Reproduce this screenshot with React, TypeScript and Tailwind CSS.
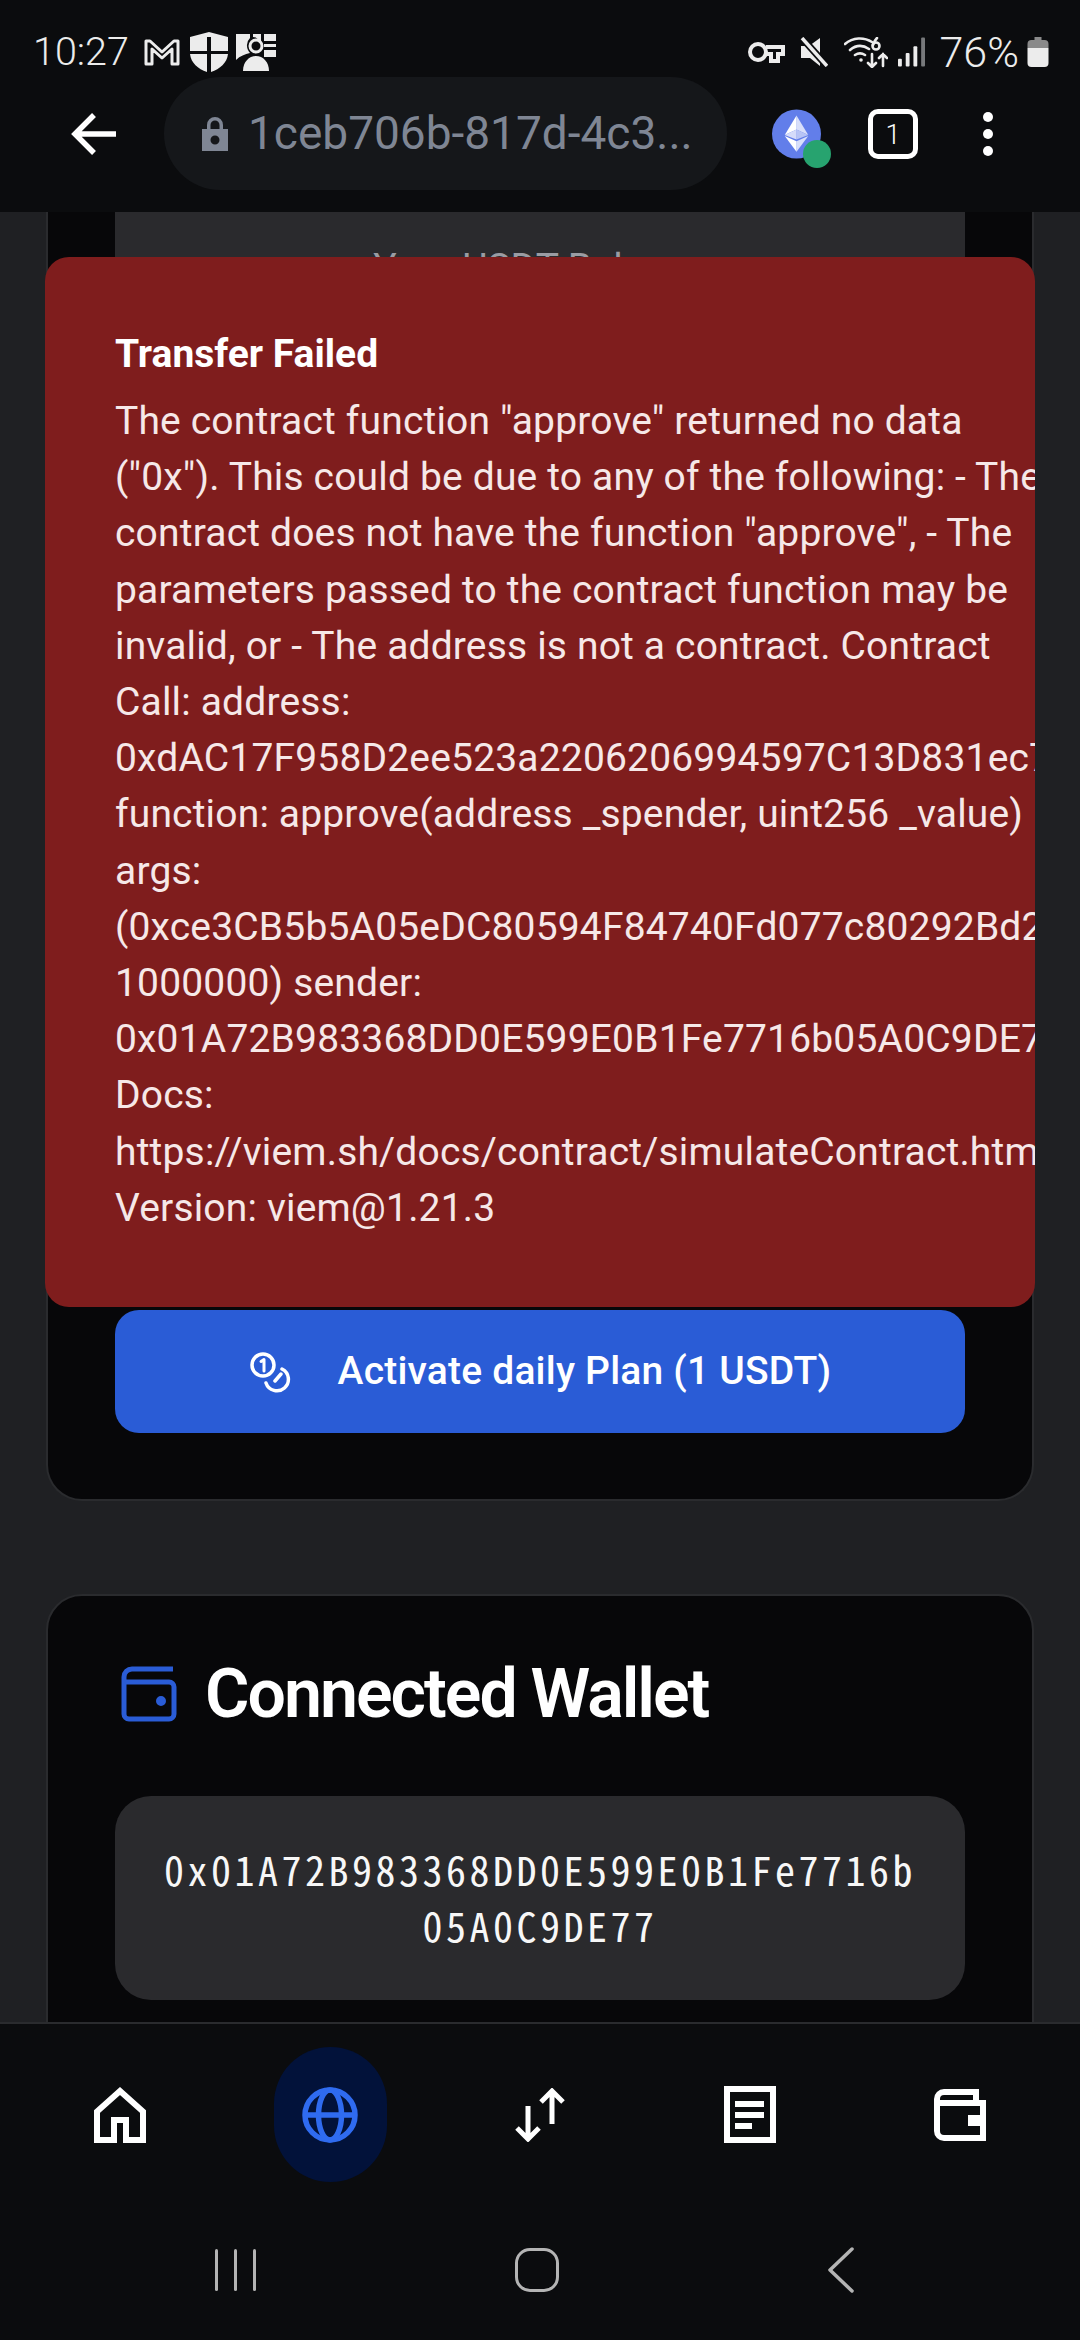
const errorText =
  'The contract function "approve" returned no data ("0x"). This could be due to any of the following: - The contract does not have the function "approve", - The parameters passed to the contract function may be invalid, or - The address is not a contract. Contract Call: address: 0xdAC17F958D2ee523a2206206994597C13D831ec7 function: approve(address _spender, uint256 _value) args: (0xce3CB5b5A05eDC80594F84740Fd077c80292Bd2c, 1000000) sender: 0x01A72B983368DD0E599E0B1Fe7716b05A0C9DE77 Docs: https://viem.sh/docs/contract/simulateContract.html Version: viem@1.21.3';

function StatusBar() {
  return (
    <div className="flex h-[77px] items-start justify-between pl-[33px] pr-[31px] pt-[32px] leading-[40px] text-[#ececec]">
      <div className="flex items-center">
        <span className="w-[95px] text-[39.500px] font-light">10:27</span>
        <svg viewBox="0 0 36 28" className="ml-[16px] w-[36px] h-[28px]" fill="none" stroke="#ececec" strokeWidth="3" strokeLinejoin="round">
          <path d="M2 3h4l12 11L30 3h4v23h-6V11L18 20 8 11v15H2z" />
        </svg>
        <svg viewBox="0 0 38 40" className="ml-[10px] w-[38px] h-[40px]" fill="#ececec">
          <path d="M0 5 19 0l19 5v14H21V5h-4v14H0z" />
          <path d="M0 22h17v18C8 37 1 31 0 22zM21 22h17c-1 9-8 15-17 18z" />
        </svg>
        <svg viewBox="0 0 40 38" className="ml-[8px] w-[40px] h-[38px]" fill="#ececec">
          <path d="M0 1h14v4a10 10 0 0 0-3 8c0 2 1 5 3 7-5 1-10 3-14 7zM28 1h12v7H28zM28 11h12v3H28zM28 17h12v7H28z" />
          <path d="M17 1h8v9h-2a6 6 0 0 0-6-6z" />
          <circle cx="20" cy="13" r="6" fill="none" stroke="#ececec" strokeWidth="3" />
          <path d="M7 38c0-9 6-15 13-15s13 6 13 15z" />
        </svg>
      </div>
      <div className="flex items-center">
        <svg viewBox="0 0 37 22" className="w-[37px] h-[22px] mr-[15px]" fill="none" stroke="#ececec" strokeWidth="4">
          <circle cx="10" cy="11" r="8" />
          <path d="M18 6h17v7h-5v7h-7v-7h-5" />
        </svg>
        <svg viewBox="0 0 28 30" className="w-[28px] h-[30px] mr-[16px]" fill="#ececec">
          <path d="M20 1v28l-10-8H1V9h8z" />
          <path d="m2 1 25 28" stroke="#0b0c0e" strokeWidth="7" />
          <path d="m2 1 25 28" stroke="#ececec" strokeWidth="3.500" />
        </svg>
        <svg viewBox="0 0 44 31" className="w-[44px] h-[31px] mr-[10px]" fill="none" stroke="#ececec" strokeWidth="2.600" strokeLinecap="round">
          <path d="M1 7c8-7 19-7 27-2M6 13c6-5 13-5 19-1M11 18c3-2 7-2 10 0" />
          <circle cx="17" cy="23" r="1.800" fill="#ececec" stroke="none" />
          <circle cx="32" cy="9" r="3.500" />
          <path d="M33 1c-2 2-3 4-4 7" />
          <path d="M28 17v13m-4-4 4 4 4-4M39 29V17m-4 4 4-4 4 4" />
        </svg>
        <svg viewBox="0 0 28 30" className="w-[27px] h-[30px] mr-[15px]" fill="#ececec">
          <rect x="0" y="22" width="4" height="8" rx="1" />
          <rect x="8" y="16" width="4" height="14" rx="1" />
          <rect x="16" y="9" width="4" height="21" rx="1" />
          <rect x="24" y="0" width="4" height="30" rx="1" fill="#77797b" />
        </svg>
        <span className="text-[43px] font-light mr-[8px]">76%</span>
        <svg viewBox="0 0 21 30" className="w-[22px] h-[30px]" fill="#ececec">
          <path d="M7 0h7v3h3a4 4 0 0 1 4 4v4H0V7a4 4 0 0 1 4-4h3z" fill="#8a8a8a" />
          <path d="M0 11h21v15a4 4 0 0 1-4 4H4a4 4 0 0 1-4-4z" />
        </svg>
      </div>
    </div>
  );
}

function BrowserBar() {
  return (
    <div className="flex h-[113px] items-center pl-[71px]">
      <svg viewBox="0 0 45 42" className="w-[45px] h-[42px]" fill="none" stroke="#fff" strokeWidth="5.500">
        <path d="M45 21H5M23 2 4 21l19 19" />
      </svg>
      <div className="ml-[48px] flex h-[113px] w-[563px] items-center rounded-full bg-[#15171a] pl-[38px]">
        <svg viewBox="0 0 26 34" className="w-[26px] h-[34px]" fill="#7f8694">
          <path d="M5 13V8a8 8 0 0 1 16 0v5h-3.500V8a4.500 4.500 0 0 0-9 0v5z" />
          <path fillRule="evenodd" d="M0 12h26v22H0zM13 18.500a4.500 4.500 0 1 0 0 9 4.500 4.500 0 0 0 0-9z" />
        </svg>
        <span className="ml-[20px] whitespace-nowrap text-[46px] text-[#7f8694]">1ceb706b-817d-4c3...</span>
      </div>
      <div className="relative ml-[45px] h-[50px] w-[49px]">
        <svg viewBox="0 0 50 50" className="w-[49px] h-[50px]">
          <circle cx="25" cy="25" r="25" fill="#627eea" />
          <path d="M25 6v14.500L37 26z" fill="#d8dffa" />
          <path d="M25 6 13 26l12-5.500z" fill="#fff" />
          <path d="M25 32.500V43l12-16z" fill="#d8dffa" />
          <path d="M25 32.500V43L13 27z" fill="#fff" />
          <path d="M25 30.500 37 26l-12-5.500z" fill="#b7c4f5" />
          <path d="M25 30.500 13 26l12-5.500z" fill="#d5dcfa" />
        </svg>
        <span className="absolute left-[31px] top-[31px] h-[28px] w-[28px] rounded-full bg-[#27a36f]" />
      </div>
      <div className="ml-[47px] flex h-[50px] w-[50px] items-center justify-center rounded-[10px] border-[5px] border-white pt-[3px] text-[27px] font-light text-white">
        1
      </div>
      <div className="ml-[65px] flex flex-col gap-[7px]">
        <span className="h-[10px] w-[10px] rounded-full bg-white" />
        <span className="h-[10px] w-[10px] rounded-full bg-white" />
        <span className="h-[10px] w-[10px] rounded-full bg-white" />
      </div>
    </div>
  );
}

function PlanCard() {
  return (
    <div className="mx-[46px] rounded-b-[36px] border-x-2 border-b-2 border-[#2a2b2e] bg-[#070709] px-[67px] pb-[66px]">
      <div className="h-[1070px] bg-[#2a2a2d] pt-[32px] text-center text-[39px] leading-[48px] text-[#9a9ca3]">
        Your USDT Balance
      </div>
      <div className="mt-[28px] flex h-[123px] items-center justify-center rounded-[24px] bg-[#2a5cd6] text-[39px] font-medium tracking-[0.2px] text-white">
        <svg viewBox="0 0 42 42" className="mr-[47px] w-[42px] h-[42px]" fill="none" stroke="#fff" strokeWidth="3.500" strokeLinecap="round">
          <circle cx="14" cy="14" r="11" />
          <path d="M15 20V8.500l-3 2" strokeWidth="3" strokeLinejoin="round" />
          <path d="M33 18a11.500 11.500 0 1 1-16 14M32 23l-6 7" />
        </svg>
        Activate daily Plan (1 USDT)
      </div>
    </div>
  );
}

function WalletCard() {
  return (
    <div className="mx-[46px] mt-[93px] h-[600px] rounded-[36px] border-2 border-[#2a2b2e] bg-[#070709] px-[67px] pt-[62px]">
      <div className="flex items-center gap-[27px] pl-[5px]">
        <svg viewBox="0 0 58 58" className="w-[58px] h-[58px]" fill="none" stroke="#2a5cd6" strokeWidth="5">
          <path d="M53 4H12a8 8 0 0 0-8 8v37a5 5 0 0 0 5 5h40a5 5 0 0 0 5-5V22a5 5 0 0 0-5-5H6" strokeLinejoin="round" />
          <circle cx="41" cy="36" r="2.500" fill="#2a5cd6" />
        </svg>
        <h2 className="text-[68px] font-semibold leading-[72px] tracking-[-2px] text-white">Connected Wallet</h2>
      </div>
      <div className="mt-[66px] h-[204px] rounded-[36px] bg-[#2a2a2d] px-[40px] py-[45px] text-center font-['Noto_Sans_Mono_CJK_SC','DejaVu_Sans_Mono',monospace] text-[40px] leading-[56px] tracking-[3.500px] break-all text-[#f7f7f7]">
        0x01A72B983368DD0E599E0B1Fe7716b05A0C9DE77
      </div>
    </div>
  );
}

function BottomNav() {
  return (
    <div className="border-t-2 border-[#2a2b2e] bg-[#0b0c0e]">
      <div className="grid h-[186px] grid-cols-5 px-[15px] pt-[23px]">
        <div className="flex h-[135px] items-center justify-center">
          <svg viewBox="0 0 52 56" className="w-[52px] h-[56px]" fill="none" stroke="#fff" strokeWidth="6">
            <path d="M3 53V24.500L26 4l23 20.500V53H32V33H20v20z" />
          </svg>
        </div>
        <div className="flex h-[135px] items-center justify-center">
          <div className="flex h-[135px] w-[113px] items-center justify-center rounded-full bg-[#02123a]">
            <svg viewBox="0 0 56 56" className="w-[56px] h-[56px]" fill="none" stroke="#2f6bf0" strokeWidth="5.500">
              <circle cx="28" cy="28" r="25" />
              <ellipse cx="28" cy="28" rx="11.500" ry="25" />
              <path d="M3 28h50" />
            </svg>
          </div>
        </div>
        <div className="flex h-[135px] items-center justify-center">
          <svg viewBox="0 0 50 54" className="w-[50px] h-[54px]" fill="none" stroke="#fff" strokeWidth="5">
            <path d="M13 18v32M2 40l11 11 11-11" />
            <path d="M37 4v32M26 14 37 3l11 11" />
          </svg>
        </div>
        <div className="flex h-[135px] items-center justify-center">
          <svg viewBox="0 0 52 57" className="w-[52px] h-[57px]" fill="#fff">
            <path fillRule="evenodd" d="M0 0h52v57H0zM6 6v45h40V6z" />
            <rect x="11" y="15" width="29" height="6" />
            <rect x="11" y="26" width="29" height="6" />
            <rect x="11" y="37" width="17" height="6" />
          </svg>
        </div>
        <div className="flex h-[135px] items-center justify-center">
          <svg viewBox="0 0 52 52" className="w-[52px] h-[52px]" fill="none" stroke="#fff" strokeWidth="6">
            <path d="M42 14V3H10a7 7 0 0 0-7 7v32a7 7 0 0 0 7 7h39V14H3" />
            <rect x="34" y="26" width="12" height="11" fill="#fff" stroke="none" />
          </svg>
        </div>
      </div>
      <div className="flex h-[130px] pl-[215px]">
        <div className="mt-[39px] flex h-[42px] gap-[16px]">
          <span className="h-[42px] w-[3px] rounded-full bg-[#b4b4b4]" />
          <span className="h-[42px] w-[3px] rounded-full bg-[#b4b4b4]" />
          <span className="h-[42px] w-[3px] rounded-full bg-[#b4b4b4]" />
        </div>
        <span className="ml-[259px] mt-[38px] h-[44px] w-[44px] rounded-[15px] border-[3px] border-[#b4b4b4]" />
        <svg viewBox="0 0 26 46" className="ml-[269px] mt-[37px] w-[26px] h-[46px]" fill="none" stroke="#b4b4b4" strokeWidth="3.500" strokeLinecap="round" strokeLinejoin="round">
          <path d="M24 2 2 23l22 21" />
        </svg>
      </div>
    </div>
  );
}

export default function App() {
  return (
    <div className="relative flex h-[2340px] w-[1080px] flex-col overflow-hidden bg-[#1f2023] font-['Roboto',sans-serif]">
      <div className="h-[212px] bg-[#0b0c0e]">
        <StatusBar />
        <BrowserBar />
      </div>
      <div className="min-h-0 flex-1 overflow-hidden">
        <PlanCard />
        <WalletCard />
      </div>
      <BottomNav />

      {/* error toast sits over the plan card, long hashes get cut at its edge */}
      <div className="absolute left-[45px] top-[257px] h-[1050px] w-[990px] overflow-hidden rounded-[24px] bg-[#7f1d1d] pl-[70px] pt-[72px] text-[39px] leading-[56.200px] text-[#f6e8e8]">
        <div className="font-bold leading-[50px] text-white">Transfer Failed</div>
        <div className="mt-[14px] w-[938px] tracking-[0.17px]">{errorText}</div>
      </div>
    </div>
  );
}
